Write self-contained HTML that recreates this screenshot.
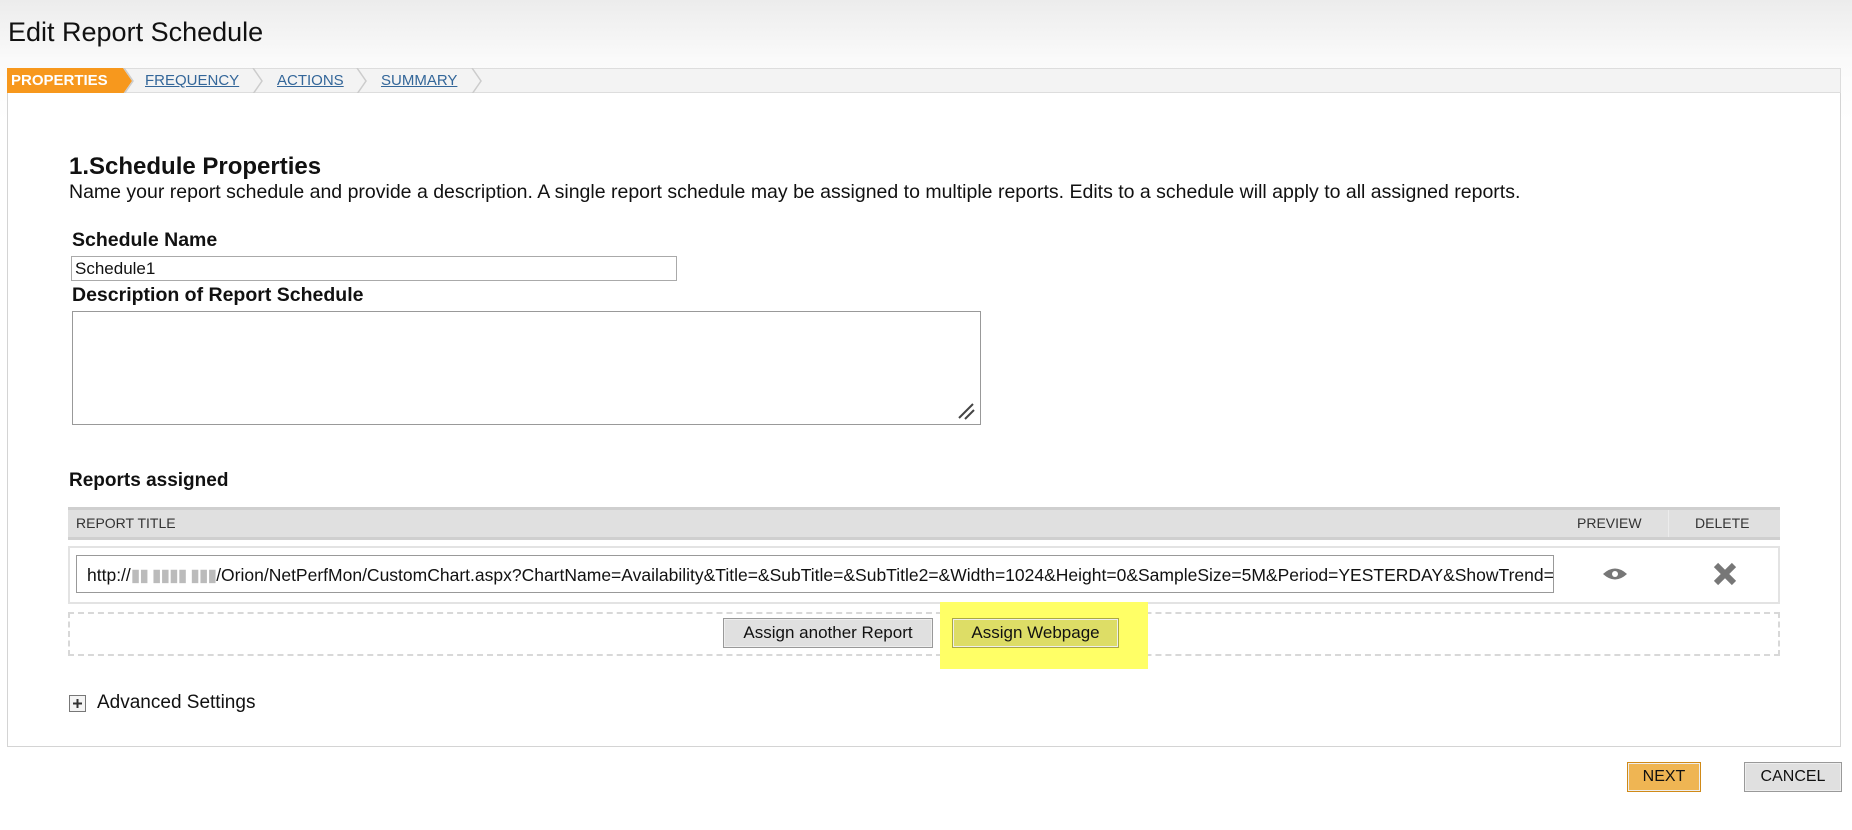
<!DOCTYPE html>
<html><head><meta charset="utf-8"><style>
*{box-sizing:border-box;margin:0;padding:0}
body{width:1852px;height:830px;position:relative;font-family:"Liberation Sans",Arial,sans-serif;color:#111;background:linear-gradient(#ececec 0,#fafafa 60px,#fff 120px);overflow:hidden}
.a{position:absolute;white-space:nowrap}
.tabs{left:7px;top:68px;width:1834px;height:26px;background:#f3f3f3;border:1px solid #ddd;border-bottom:2px solid #ddd}
.tab{top:72px;font-size:15px;color:#336699;text-decoration:underline}
.panel{left:7px;top:93px;width:1834px;height:654px;background:#fff;border:1px solid #d4d4d4;border-top:none}
.btn{border:1px solid #999;background:#e0e0e0;font-size:17px;text-align:center;line-height:27px;box-shadow:inset 0 0 0 1px #eee}
</style></head><body>
<div class="a" style="left:8px;top:17px;font-size:27px;color:#111">Edit Report Schedule</div>
<div class="a tabs"></div>
<svg class="a" style="left:7px;top:68px" width="480" height="26">
<polygon points="0,0 116,0 125,13 116,26 0,26" fill="#f7981d"/>
<polyline points="117,0 126,13 117,26" fill="none" stroke="#ccc" stroke-width="1.5"/>
<polyline points="246,0 255,13 246,26" fill="none" stroke="#ccc" stroke-width="1.5"/>
<polyline points="350,0 359,13 350,26" fill="none" stroke="#ccc" stroke-width="1.5"/>
<polyline points="465,0 474,13 465,26" fill="none" stroke="#ccc" stroke-width="1.5"/>
</svg>
<div class="a" style="left:11px;top:72px;font-size:15px;font-weight:bold;color:#fff">PROPERTIES</div>
<div class="a tab" style="left:145px">FREQUENCY</div>
<div class="a tab" style="left:277px">ACTIONS</div>
<div class="a tab" style="left:381px">SUMMARY</div>
<div class="a panel"></div>
<div class="a" style="left:69px;top:153px;font-size:24px;font-weight:bold">1.Schedule Properties</div>
<div class="a" style="left:69px;top:181px;font-size:19.5px">Name your report schedule and provide a description. A single report schedule may be assigned to multiple reports. Edits to a schedule will apply to all assigned reports.</div>
<div class="a" style="left:72px;top:229px;font-size:19.5px;font-weight:bold">Schedule Name</div>
<div class="a" style="left:71px;top:256px;width:606px;height:25px;border:1px solid #aaa;font-size:17px;padding:2px 3px">Schedule1</div>
<div class="a" style="left:72px;top:284px;font-size:19.5px;font-weight:bold">Description of Report Schedule</div>
<div class="a" style="left:72px;top:311px;width:909px;height:114px;border:1px solid #999"></div>
<svg class="a" style="left:955px;top:400px" width="22" height="22"><path d="M4 18 L18 4 M10 19 L19 10" stroke="#444" stroke-width="2"/></svg>
<div class="a" style="left:69px;top:470px;font-size:19px;font-weight:bold">Reports assigned</div>
<div class="a" style="left:68px;top:507px;width:1712px;height:33px;background:#e0e0e0;border-top:3px solid #cfcfcf;border-bottom:3px solid #cfcfcf"></div>
<div class="a" style="left:1668px;top:510px;width:1px;height:27px;background:#ececec"></div>
<div class="a" style="left:76px;top:515px;font-size:14px;color:#333">REPORT TITLE</div>
<div class="a" style="left:1577px;top:515px;font-size:14px;color:#333">PREVIEW</div>
<div class="a" style="left:1695px;top:515px;font-size:14px;color:#333">DELETE</div>
<div class="a" style="left:68px;top:546px;width:1712px;height:58px;border:2px solid #e3e3e3"></div>
<div class="a" style="left:76px;top:555px;width:1478px;height:38px;border:1px solid #999;font-size:17.5px;padding:9px 10px;overflow:hidden">http://<span style="color:#bbb;letter-spacing:-1px">▮▮ ▮▮▮▮ ▮▮▮</span>/Orion/NetPerfMon/CustomChart.aspx?ChartName=Availability&amp;Title=&amp;SubTitle=&amp;SubTitle2=&amp;Width=1024&amp;Height=0&amp;SampleSize=5M&amp;Period=YESTERDAY&amp;ShowTrend=True</div>
<svg class="a" style="left:1602px;top:566px" width="26" height="16"><path d="M1 8 Q13 -3 25 8 Q13 19 1 8Z" fill="#777"/><circle cx="13" cy="8" r="3" fill="#fff"/></svg>
<svg class="a" style="left:1712px;top:561px" width="26" height="26"><path d="M4 4 L22 22 M22 4 L4 22" stroke="#777" stroke-width="6"/></svg>
<div class="a" style="left:68px;top:612px;width:1712px;height:44px;border:2px dashed #d8d8d8"></div>
<div class="a" style="left:940px;top:602px;width:208px;height:67px;background:#ffff66"></div>
<div class="a btn" style="left:723px;top:618px;width:210px;height:30px">Assign another Report</div>
<div class="a btn" style="left:952px;top:618px;width:167px;height:30px;background:#dddd66;border-color:#aaa844">Assign Webpage</div>
<svg class="a" style="left:69px;top:695px" width="18" height="18"><rect x="0.5" y="0.5" width="16" height="16" fill="#f4f4f4" stroke="#777"/><path d="M4 8.5 H13 M8.5 4 V13" stroke="#333" stroke-width="2"/></svg>
<div class="a" style="left:97px;top:692px;font-size:19px">Advanced Settings</div>
<div class="a btn" style="left:1627px;top:762px;width:74px;height:30px;background:#efb553;border-color:#d08a18;font-size:16px;line-height:28px">NEXT</div>
<div class="a btn" style="left:1744px;top:762px;width:98px;height:30px;font-size:16px;line-height:28px">CANCEL</div>
</body></html>
